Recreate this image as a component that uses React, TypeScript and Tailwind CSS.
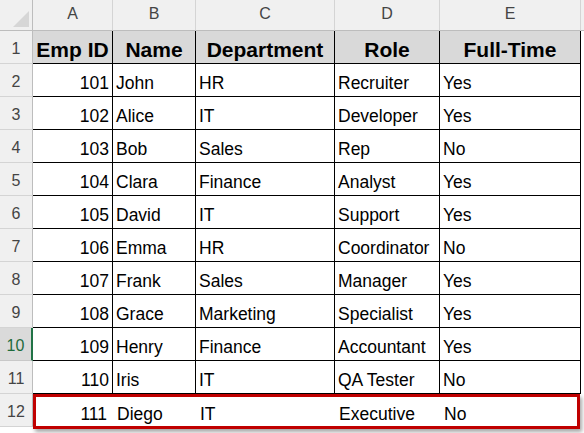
const cols = ['A', 'B', 'C', 'D', 'E'];
const widths = ['w-[80px]', 'w-[83px]', 'w-[139px]', 'w-[105px]', 'w-[141px]'];
const lastWidths = ['w-[77px]', 'w-[83px]', 'w-[139px]', 'w-[105px]', 'flex-1'];

const rows = [
  ['101', 'John', 'HR', 'Recruiter', 'Yes'],
  ['102', 'Alice', 'IT', 'Developer', 'Yes'],
  ['103', 'Bob', 'Sales', 'Rep', 'No'],
  ['104', 'Clara', 'Finance', 'Analyst', 'Yes'],
  ['105', 'David', 'IT', 'Support', 'Yes'],
  ['106', 'Emma', 'HR', 'Coordinator', 'No'],
  ['107', 'Frank', 'Sales', 'Manager', 'Yes'],
  ['108', 'Grace', 'Marketing', 'Specialist', 'Yes'],
  ['109', 'Henry', 'Finance', 'Accountant', 'Yes'],
  ['110', 'Iris', 'IT', 'QA Tester', 'No'],
];

function RowHead({ n, active }: { n: number; active?: boolean }) {
  return (
    <div
      className={
        'w-[33px] h-[33px] shrink-0 flex items-end justify-center pb-[2px] text-[16px] border-b border-r ' +
        (active
          ? 'bg-[#dadada] text-[#1e6b3c] border-b-[#c8c8c8] border-r-2 border-r-[#217346]'
          : 'bg-[#f0f0f0] text-[#444] border-b-[#d4d4d4] border-r-[#bdbdbd]')
      }
    >
      {n}
    </div>
  );
}

export default function App() {
  return (
    <div className="w-[584px] h-[433px] bg-white overflow-hidden" style={{ fontFamily: '"Liberation Sans", Arial, sans-serif' }}>
      {/* column letters */}
      <div className="flex h-[31px]">
        <div className="w-[33px] h-[31px] bg-[#f0f0f0] border-r border-b border-[#bdbdbd] relative">
          <div className="absolute right-[3px] bottom-[3px] w-0 h-0 border-l-[16px] border-l-transparent border-b-[16px] border-b-[#d6d6d6]" />
        </div>
        {cols.map((c, i) => (
          <div
            key={c}
            className={widths[i] + ' h-[31px] bg-[#f0f0f0] border-r border-r-[#d4d4d4] border-b border-b-[#bdbdbd] flex items-end justify-center pb-[4px] text-[16px] text-[#444]'}
          >
            {c}
          </div>
        ))}
        <div className="flex-1 bg-[#f0f0f0] border-b border-b-[#bdbdbd]" />
      </div>

      {/* header row */}
      <div className="flex">
        <RowHead n={1} />
        {['Emp ID', 'Name', 'Department', 'Role', 'Full-Time'].map((h, i) => (
          <div
            key={h}
            className={widths[i] + ' h-[33px] bg-[#d9d9d9] border-r border-b border-black flex items-end justify-center pb-[3px] text-[21px] font-bold text-black leading-none'}
          >
            {h}
          </div>
        ))}
      </div>

      {rows.map((r, ri) => (
        <div key={ri} className="flex">
          <RowHead n={ri + 2} active={ri + 2 === 10} />
          {r.map((v, i) => (
            <div
              key={i}
              className={
                widths[i] +
                ' h-[33px] border-r border-b border-black flex items-end pb-[4px] text-[17.5px] text-black leading-none ' +
                (i === 0 ? 'justify-end pr-[3px]' : 'justify-start pl-[3px]')
              }
            >
              {v}
            </div>
          ))}
        </div>
      ))}

      {/* new row */}
      <div className="flex">
        <RowHead n={12} />
        <div className="flex w-[547px] h-[35px] border-[3px] border-[#c00000] shadow-[2px_3px_4px_rgba(0,0,0,0.35)]">
          {['111', 'Diego', 'IT', 'Executive', 'No'].map((v, i) => (
            <div
              key={i}
              className={
                lastWidths[i] +
                ' shrink-0 h-full flex items-end pb-[3px] text-[17.5px] text-black leading-none ' +
                (i === 0 ? 'justify-end pr-[6px]' : 'justify-start pl-[4px]')
              }
            >
              {v}
            </div>
          ))}
        </div>
      </div>
    </div>
  );
}
